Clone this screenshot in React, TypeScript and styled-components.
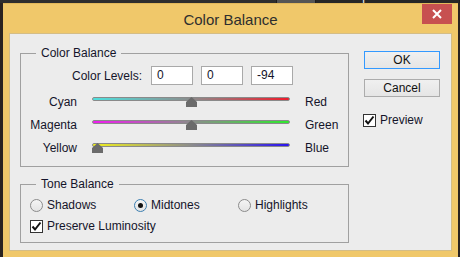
import React, { FC } from 'react'
import styled, { createGlobalStyle } from 'styled-components'

const GlobalStyle = createGlobalStyle`
  html, body {
    margin: 0;
    padding: 0;
    background: #2a2320;
  }
  * {
    box-sizing: border-box;
  }
`

const UI_FONT = '"Liberation Sans", Arial, sans-serif'

const Desktop = styled.div`
  width: 460px;
  height: 257px;
  overflow: hidden;
  display: flex;
  flex-direction: column;
  background: #2a2320;
  font-family: ${UI_FONT};
`

const TopStrip = styled.div`
  height: 3px;
  display: flex;
  background: #2f2f2f;
`

interface IStripPart {
    width: string
    bg: string
}

const StripPart = styled.div<IStripPart>`
  width: ${(props) => props.width};
  height: 3px;
  background: ${(props) => props.bg};
  border-right: 1px solid #1c1c1c;
  overflow: hidden;
`

const StripText = styled.div`
  margin: -11px 0 0 9px;
  font-size: 12px;
  line-height: 14px;
  color: #f2f2f2;
  white-space: nowrap;
`

const WindowRow = styled.div`
  flex: 1;
  display: flex;
  padding-left: 3px;
`

const Window = styled.div`
  width: 455px;
  height: 254px;
  display: flex;
  flex-direction: column;
  padding: 0 6px 6px;
  background: #f0c86a;
  border-top: 1px solid #e2b85a;
`

const TitleBar = styled.div`
  height: 29px;
  display: grid;
  grid-template-columns: 1fr auto 1fr;
  align-items: center;
`

const Title = styled.div`
  grid-column: 2;
  font-size: 15px;
  color: #2e2e2e;
  padding-top: 1px;
`

const CloseButton = styled.div`
  grid-column: 3;
  justify-self: end;
  align-self: start;
  width: 30px;
  height: 20px;
  background: #c75050;
  display: flex;
  align-items: center;
  justify-content: center;
`

const Client = styled.div`
  flex: 1;
  display: flex;
  background: #ececec;
  border: 1px solid #d4bd86;
  padding: 12px 0 0 10px;
  color: #14142a;
  font-size: 12px;
`

const LeftColumn = styled.div`
  width: 329px;
  display: flex;
  flex-direction: column;
`

const RightColumn = styled.div`
  margin-left: 15px;
  padding-top: 5px;
  display: flex;
  flex-direction: column;
`

interface IGroup {
    spaced?: boolean
}

const Group = styled.fieldset<IGroup>`
  margin: ${(props) => (props.spaced ? '10px 0 0' : '0')};
  padding: 0;
  border: 1px solid #a0a0a0;
  min-width: 0;
`

const Legend = styled.legend`
  margin-left: 15px;
  padding: 0 5px;
  font-size: 12px;
  line-height: 14px;
`

const LevelsRow = styled.div`
  display: grid;
  grid-template-columns: 122px repeat(3, 42px);
  column-gap: 8px;
  align-items: center;
  margin-top: 6px;
`

const LevelsLabel = styled.div`
  text-align: right;
  margin-right: 1px;
`

const NumberBox = styled.div`
  height: 19px;
  background: #fff;
  border: 1px solid #a9a9a9;
  padding-left: 5px;
  line-height: 17px;
  font-size: 12px;
`

const SliderList = styled.div`
  margin-top: 5px;
  padding-bottom: 7px;
`

const SliderRow = styled.div`
  display: grid;
  grid-template-columns: 56px 198px auto;
  column-gap: 15px;
  height: 23px;
  align-items: center;
`

const SideLabel = styled.div<{ align: 'left' | 'right' }>`
  text-align: ${(props) => props.align};
`

const TrackWrap = styled.div`
  position: relative;
  height: 23px;
`

const Track = styled.div<{ gradient: string }>`
  position: absolute;
  left: 0;
  right: 0;
  top: 7px;
  height: 4px;
  border-radius: 2px;
  border: 1px solid #8a8a8a;
  background: ${(props) => props.gradient};
`

const Thumb = styled.svg`
  position: absolute;
  top: 7px;
  width: 11px;
  height: 10px;
`

const ToneBody = styled.div`
  padding: 6px 0 8px 9px;
  display: flex;
  flex-direction: column;
  gap: 5px;
`

const RadioRow = styled.div`
  display: grid;
  grid-template-columns: repeat(3, 104px);
`

const OptionLabel = styled.div`
  display: flex;
  align-items: center;
  gap: 4px;
  height: 16px;
`

const RadioCircle = styled.div<{ checked?: boolean }>`
  width: 13px;
  height: 13px;
  border-radius: 50%;
  border: 1px solid ${(props) => (props.checked ? '#3c7fb1' : '#8b8b8b')};
  background: linear-gradient(#f4f4f4, #e4e4e4);
  display: flex;
  align-items: center;
  justify-content: center;
`

const RadioDot = styled.div`
  width: 5px;
  height: 5px;
  border-radius: 50%;
  background: #111;
`

const CheckBox = styled.div`
  width: 13px;
  height: 13px;
  border: 1px solid #333;
  background: #fff;
  display: flex;
  align-items: center;
  justify-content: center;
`

interface IButton {
    isDefault?: boolean
    gapTop?: string
}

const DialogButton = styled.div<IButton>`
  width: 76px;
  height: 18px;
  margin-top: ${(props) => props.gapTop || '0'};
  border: 1px solid ${(props) => (props.isDefault ? '#3399ff' : '#acacac')};
  background: linear-gradient(#f0f0f0, #e5e5e5);
  display: flex;
  align-items: center;
  justify-content: center;
  font-size: 12px;
  color: #111;
`

const PreviewOption = styled(OptionLabel)`
  margin-top: 15px;
  margin-left: -1px;
`

const sliders = [
    { left: 'Cyan', right: 'Red', value: 0, gradient: 'linear-gradient(90deg, #4fe0de, #8c8c8c 50%, #ee1c2c)' },
    { left: 'Magenta', right: 'Green', value: 0, gradient: 'linear-gradient(90deg, #f01cf0, #8c8c8c 50%, #2ee82e)' },
    { left: 'Yellow', right: 'Blue', value: -94, gradient: 'linear-gradient(90deg, #f0f01c, #8c8c8c 50%, #2a14f0)' },
]

const Check: FC = () => (
    <CheckBox>
        <svg width="11" height="11" viewBox="0 0 11 11">
            <path d="M1.5 5.5 L4 8.5 L9.5 1.5" fill="none" stroke="#111" strokeWidth="2" />
        </svg>
    </CheckBox>
)

const App: FC = () => {
    return (
        <Desktop>
            <GlobalStyle />
            <TopStrip>
                <StripPart width="277px" bg="#2e2e2e" />
                <StripPart width="39px" bg="#555555" />
                <StripPart width="144px" bg="#262626">
                    <StripText>No Properties</StripText>
                </StripPart>
            </TopStrip>
            <WindowRow>
                <Window>
                    <TitleBar>
                        <Title>Color Balance</Title>
                        <CloseButton>
                            <svg width="10" height="10" viewBox="0 0 10 10">
                                <path d="M1 1 L9 9 M9 1 L1 9" stroke="#fff" strokeWidth="2" />
                            </svg>
                        </CloseButton>
                    </TitleBar>
                    <Client>
                        <LeftColumn>
                            <Group>
                                <Legend>Color Balance</Legend>
                                <LevelsRow>
                                    <LevelsLabel>Color Levels:</LevelsLabel>
                                    <NumberBox>0</NumberBox>
                                    <NumberBox>0</NumberBox>
                                    <NumberBox>-94</NumberBox>
                                </LevelsRow>
                                <SliderList>
                                    {sliders.map((s) => (
                                        <SliderRow key={s.left}>
                                            <SideLabel align="right">{s.left}</SideLabel>
                                            <TrackWrap>
                                                <Track gradient={s.gradient} />
                                                <Thumb
                                                    viewBox="0 0 11 10"
                                                    style={{ left: `calc(${(s.value + 100) / 2}% - 5.5px)` }}
                                                >
                                                    <polygon points="5.5,0 11,5 11,10 0,10 0,5" fill="#6b6b6b" />
                                                </Thumb>
                                            </TrackWrap>
                                            <SideLabel align="left">{s.right}</SideLabel>
                                        </SliderRow>
                                    ))}
                                </SliderList>
                            </Group>
                            <Group spaced>
                                <Legend>Tone Balance</Legend>
                                <ToneBody>
                                    <RadioRow>
                                        <OptionLabel>
                                            <RadioCircle />
                                            Shadows
                                        </OptionLabel>
                                        <OptionLabel>
                                            <RadioCircle checked>
                                                <RadioDot />
                                            </RadioCircle>
                                            Midtones
                                        </OptionLabel>
                                        <OptionLabel>
                                            <RadioCircle />
                                            Highlights
                                        </OptionLabel>
                                    </RadioRow>
                                    <OptionLabel>
                                        <Check />
                                        Preserve Luminosity
                                    </OptionLabel>
                                </ToneBody>
                            </Group>
                        </LeftColumn>
                        <RightColumn>
                            <DialogButton isDefault>OK</DialogButton>
                            <DialogButton gapTop="10px">Cancel</DialogButton>
                            <PreviewOption>
                                <Check />
                                Preview
                            </PreviewOption>
                        </RightColumn>
                    </Client>
                </Window>
            </WindowRow>
        </Desktop>
    )
}

export default App
